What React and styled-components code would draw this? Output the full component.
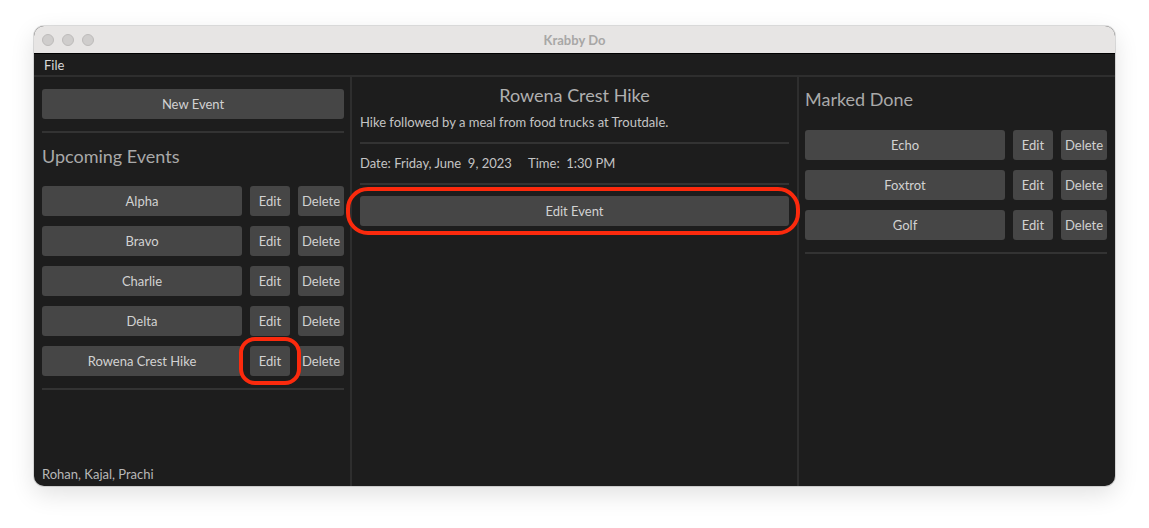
import React from "react";
import styled, { createGlobalStyle } from "styled-components";

const Global = createGlobalStyle`
  html, body { margin: 0; padding: 0; background: #ffffff; }
  body { font-family: "Lato", "Open Sans", sans-serif; }
  * { box-sizing: border-box; }
`;

const Page = styled.div`
  width: 1149px;
  height: 528px;
  padding: 26px 34px 0 34px;
`;

const Window = styled.div`
  width: 1081px;
  height: 460px;
  border-radius: 10px;
  overflow: hidden;
  background: #1d1d1d;
  box-shadow: 0 0 0 1px rgba(0,0,0,0.12), 0 8px 24px rgba(0,0,0,0.12);
  display: flex;
  flex-direction: column;
  position: relative;
`;

const TitleBar = styled.div`
  height: 28px;
  background: #e7e5e4;
  border-bottom: 1px solid #000;
  display: flex;
  align-items: center;
  position: relative;
  flex-shrink: 0;
`;

const Lights = styled.div`
  display: flex;
  gap: 8px;
  padding-left: 8px;
`;

const Light = styled.span`
  width: 12px;
  height: 12px;
  border-radius: 50%;
  background: #cfcdcc;
  border: 1px solid #bdbbba;
`;

const Title = styled.div`
  position: absolute;
  left: 0;
  right: 0;
  text-align: center;
  font-size: 13px;
  font-weight: 700;
  color: #a8a7a6;
`;

const MenuBar = styled.div`
  height: 23px;
  display: flex;
  align-items: center;
  padding-left: 10px;
  font-size: 13px;
  color: #d8d8d8;
  border-bottom: 2px solid #2e2e2e;
  flex-shrink: 0;
`;

const Body = styled.div`
  flex: 1;
  display: grid;
  grid-template-columns: 316px 2px 445px 2px 1fr;
  min-height: 0;
`;

const VDivider = styled.div`
  background: #2e2e2e;
`;

const Panel = styled.div`
  display: flex;
  flex-direction: column;
  padding: ${(p) => p.$pad || "12px 8px 8px 8px"};
  min-height: 0;
`;

const Button = styled.div`
  background: #464646;
  border-radius: 3px;
  height: 30px;
  display: flex;
  align-items: center;
  justify-content: center;
  color: #d2d2d2;
  font-size: 13px;
  width: ${(p) => p.$w || "auto"};
  flex: ${(p) => (p.$grow ? 1 : "none")};
  white-space: nowrap;
`;

const HLine = styled.div`
  height: 2px;
  background: #333333;
  margin: ${(p) => p.$m || "0"};
`;

const Heading = styled.div`
  font-size: 18px;
  color: #a9a9a9;
  margin: ${(p) => p.$m || "0"};
  line-height: 24px;
`;

const Rows = styled.div`
  display: flex;
  flex-direction: column;
  gap: 10px;
`;

const Row = styled.div`
  display: flex;
  gap: 8px;
`;

const Footer = styled.div`
  margin-top: auto;
  font-size: 13px;
  color: #b8b8b8;
`;

const CenterTitle = styled.div`
  text-align: center;
  font-size: 18px;
  color: #b0b0b0;
  line-height: 24px;
`;

const Text = styled.div`
  font-size: 13px;
  color: #c4c4c4;
  white-space: pre;
  margin: ${(p) => p.$m || "0"};
  line-height: 18px;
`;

const Highlight = styled.div`
  position: relative;
  &::after {
    content: "";
    position: absolute;
    left: ${(p) => p.$l}px;
    right: ${(p) => p.$r}px;
    top: ${(p) => p.$t}px;
    bottom: ${(p) => p.$b}px;
    border: 4px solid #fb2a0d;
    border-radius: ${(p) => p.$rad}px;
    pointer-events: none;
  }
`;

function EventRow({ name, highlightEdit }) {
  return (
    <Row>
      <Button $w="200px">{name}</Button>
      {highlightEdit ? (
        <Highlight $l={-11} $r={-11} $t={-9} $b={-9} $rad={16}>
          <Button $w="40px">Edit</Button>
        </Highlight>
      ) : (
        <Button $w="40px">Edit</Button>
      )}
      <Button $grow>Delete</Button>
    </Row>
  );
}

export default function App() {
  return (
    <>
      <Global />
      <Page>
        <Window>
          <TitleBar>
            <Lights>
              <Light />
              <Light />
              <Light />
            </Lights>
            <Title>Krabby Do</Title>
          </TitleBar>
          <MenuBar>File</MenuBar>
          <Body>
            <Panel $pad="12px 6px 4px 8px">
              <Button>New Event</Button>
              <HLine $m="12px 0 11px" />
              <Heading $m="0 0 18px">Upcoming Events</Heading>
              <Rows>
                <EventRow name="Alpha" />
                <EventRow name="Bravo" />
                <EventRow name="Charlie" />
                <EventRow name="Delta" />
                <EventRow name="Rowena Crest Hike" highlightEdit />
              </Rows>
              <HLine $m="12px 0 0" />
              <Footer>Rohan, Kajal, Prachi</Footer>
            </Panel>
            <VDivider />
            <Panel $pad="6px 8px 8px 8px">
              <CenterTitle>Rowena Crest Hike</CenterTitle>
              <Text $m="6px 0 0">Hike followed by a meal from food trucks at Troutdale.</Text>
              <HLine $m="11px 0 10px" />
              <Text>Date: Friday, June  9, 2023     Time:  1:30 PM</Text>
              <HLine $m="11px 0 11px" />
              <Highlight $l={-14} $r={-11} $t={-9} $b={-9} $rad={22}>
                <Button>Edit Event</Button>
              </Highlight>
            </Panel>
            <VDivider />
            <Panel $pad="10px 8px 8px 6px">
              <Heading $m="0 0 19px">Marked Done</Heading>
              <Rows>
                <EventRow name="Echo" />
                <EventRow name="Foxtrot" />
                <EventRow name="Golf" />
              </Rows>
              <HLine $m="12px 0 0" />
            </Panel>
          </Body>
        </Window>
      </Page>
    </>
  );
}
